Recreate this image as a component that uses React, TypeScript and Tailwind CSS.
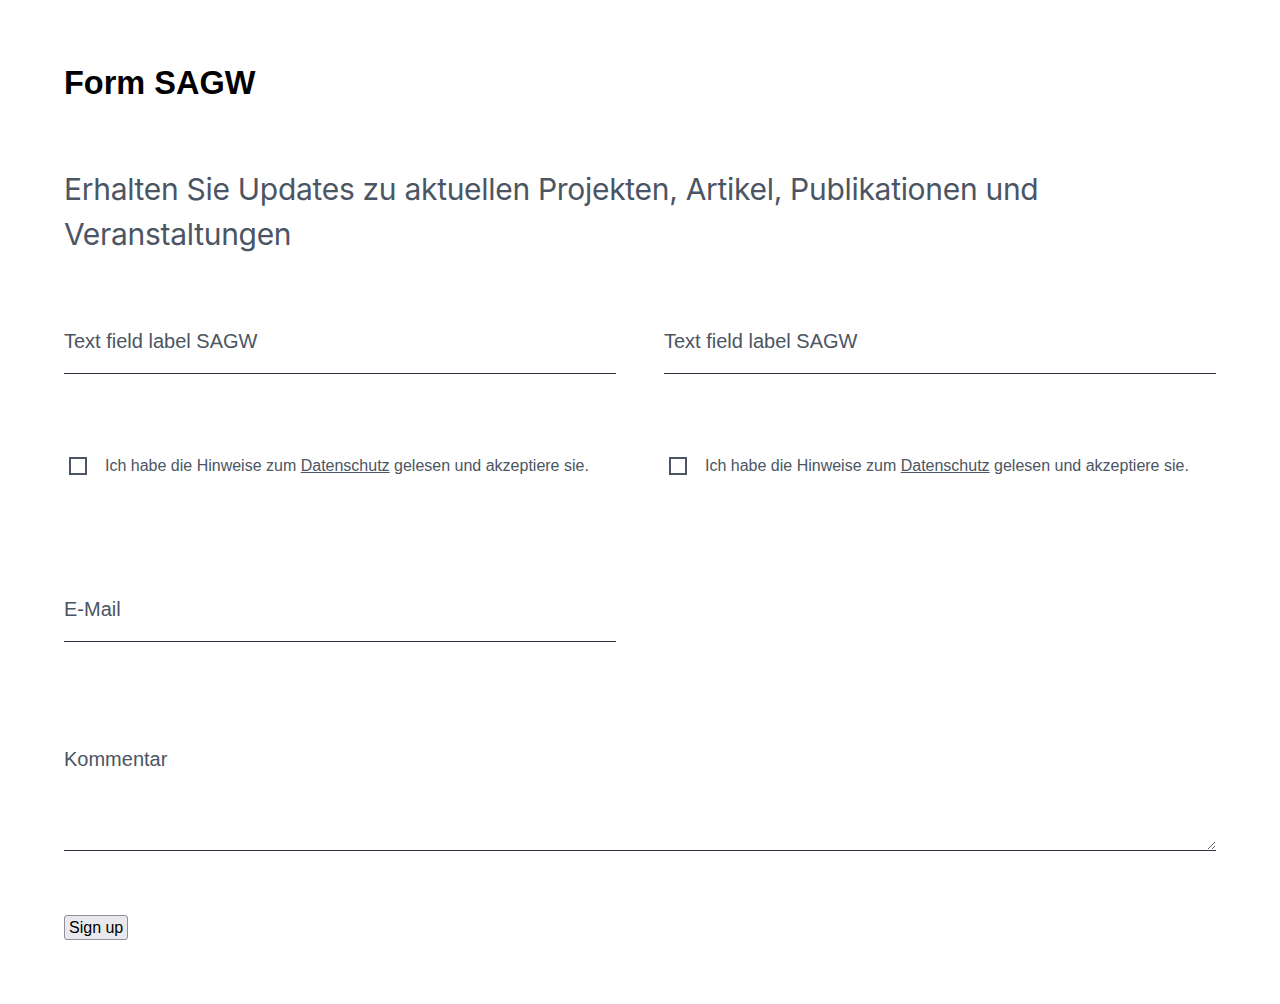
import React from "react";

function Field({ label }: { label: string }) {
  return (
    <input
      type="text"
      placeholder={label}
      className="block w-full border-b border-[#2d3440] bg-transparent pt-[16px] pb-[20px] text-[20px] leading-[24px] text-[#4b5563] placeholder:text-[#4b5563] outline-none"
    />
  );
}

function Consent() {
  return (
    <label className="flex items-center gap-[18px] pl-[5px] text-[16px] leading-[24px] text-[#4b5563]">
      <span className="inline-block h-[18px] w-[18px] shrink-0 border-2 border-[#4b5563] bg-white" />
      <span>
        Ich habe die Hinweise zum{" "}
        <a href="#" className="underline">
          Datenschutz
        </a>{" "}
        gelesen und akzeptiere sie.
      </span>
    </label>
  );
}

export default function App() {
  return (
    <div
      className="min-h-[1004px] bg-white px-16 pt-[59px]"
      style={{ fontFamily: '"Liberation Sans", Arial, sans-serif' }}
    >
      <h1 className="text-[32.5px] font-bold leading-[48px] text-black">Form SAGW</h1>
      <h2
        className="mt-[60px] text-[30px] leading-[45px] tracking-[-0.3px] text-[#4b5563]"
        style={{ fontFamily: 'Inter, "Liberation Sans", sans-serif' }}
      >
        Erhalten Sie Updates zu aktuellen Projekten, Artikel, Publikationen und Veranstaltungen
      </h2>

      <div className="mt-[56px] grid grid-cols-2 gap-x-12">
        <Field label="Text field label SAGW" />
        <Field label="Text field label SAGW" />
        <div className="mt-[80px]">
          <Consent />
        </div>
        <div className="mt-[80px]">
          <Consent />
        </div>
        <div className="mt-[103px]">
          <Field label="E-Mail" />
        </div>
      </div>

      <textarea
        placeholder="Kommentar"
        className="mt-[89px] block h-[120px] w-full resize-y border-b border-[#2d3440] bg-transparent pt-[16px] text-[20px] leading-[24px] text-[#4b5563] placeholder:text-[#4b5563] outline-none"
      />

      <button
        type="button"
        className="mt-[64px] block h-[25px] rounded-[3px] border border-[#8f8f9d] bg-[#e9e9ed] px-[4px] text-[16px] leading-[20px] text-black"
      >
        Sign up
      </button>
    </div>
  );
}
